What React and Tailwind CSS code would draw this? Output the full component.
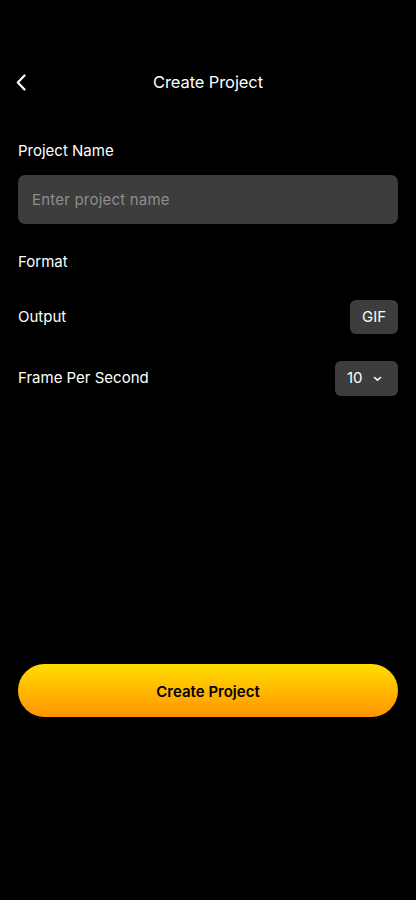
export default function App() {
  return (
    <div className="w-[416px] h-[900px] bg-black text-white flex flex-col" style={{ fontFamily: "Inter, 'Noto Sans', sans-serif" }}>
      <div className="h-[60px]" />
      <div className="relative h-[46px] flex items-center justify-center">
        <button className="absolute left-[15px] top-[13px] w-[12px] h-[18px] flex items-center justify-center">
          <svg width="10" height="17" viewBox="0 0 10 17" fill="none">
            <path d="M8.5 1.5L1.8 8.5L8.5 15.5" stroke="white" strokeWidth="2.2" strokeLinecap="round" strokeLinejoin="round" />
          </svg>
        </button>
        <h1 className="text-[16.5px] font-normal tracking-[-0.1px] pb-[2px]">Create Project</h1>
      </div>
      <div className="px-[18px] flex flex-col">
        <div className="mt-[35px] text-[15px] leading-[20px]">Project Name</div>
        <input
          className="mt-[14px] h-[49px] w-full rounded-[7px] bg-[#3d3d3d] px-[14px] text-[15px] text-white placeholder:text-[#8e8e8e] outline-none tracking-[0.2px]"
          placeholder="Enter project name"
        />
        <div className="mt-[28px] text-[15px] leading-[20px]">Format</div>
        <div className="mt-[28px] flex items-center justify-between h-[34px]">
          <span className="text-[15px]">Output</span>
          <div className="h-[34px] w-[48px] rounded-[6px] bg-[#3d3d3d] flex items-center justify-center text-[15px]">GIF</div>
        </div>
        <div className="mt-[27px] flex items-center justify-between h-[35px]">
          <span className="text-[15px]">Frame Per Second</span>
          <div className="h-[35px] w-[63px] rounded-[6px] bg-[#3d3d3d] flex items-center pl-[12px] gap-[10px] text-[15px]">
            <span>10</span>
            <svg width="9" height="6" viewBox="0 0 9 6" fill="none">
              <path d="M1.5 1.5L4.5 4.2L7.5 1.5" stroke="white" strokeWidth="1.6" strokeLinecap="round" strokeLinejoin="round" />
            </svg>
          </div>
        </div>
        <button className="mt-[268px] h-[53px] w-full rounded-full bg-gradient-to-b from-[#ffdc00] to-[#ff9400] text-black text-[15px] font-semibold pt-[3px]">
          Create Project
        </button>
      </div>
    </div>
  );
}
